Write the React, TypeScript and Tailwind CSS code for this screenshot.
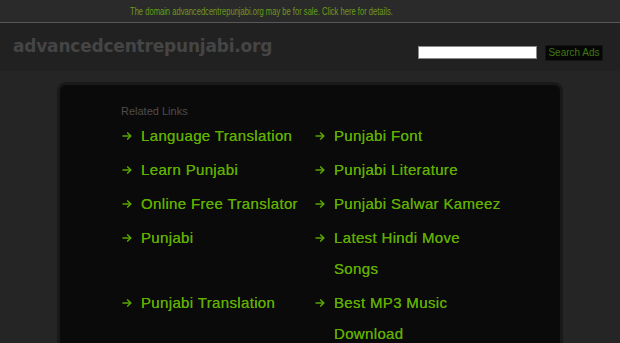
import React from "react";

const items: [string, string][] = [
  ["Language Translation", "Punjabi Font"],
  ["Learn Punjabi", "Punjabi Literature"],
  ["Online Free Translator", "Punjabi Salwar Kameez"],
  ["Punjabi", "Latest Hindi Move Songs"],
  ["Punjabi Translation", "Best MP3 Music Download"],
];

function Arrow() {
  return (
    <svg width="10" height="10" viewBox="0 0 10 10" className="mt-[11px]" fill="none" stroke="#5fae00" strokeWidth="1.4">
      <path d="M0.5 5H8.8" />
      <path d="M5.2 1.4L8.8 5L5.2 8.6" />
    </svg>
  );
}

function Item({ text }: { text: string }) {
  return (
    <div className="flex mb-[3px]">
      <span className="w-[19px] shrink-0">
        <Arrow />
      </span>
      <a className="text-[15px] leading-[31px] tracking-[0.35px] text-[#5fae00] [text-shadow:0_0_0.5px_#5fae00]">{text}</a>
    </div>
  );
}

export default function App() {
  return (
    <div className="w-[620px] h-[343px] overflow-hidden bg-[#252525] font-['Liberation_Sans',Arial,sans-serif]">
      <div className="h-[23px] bg-[#2a2a2a] border-b border-[#585858] flex items-center">
        <a className="ml-[130px] text-[11px] leading-none text-[#6a9c1c] origin-left scale-x-[0.69] whitespace-nowrap inline-block">
          The domain advancedcentrepunjabi.org may be for sale. Click here for details.
        </a>
      </div>
      <div className="h-[48px] bg-[#212121] flex items-center justify-between pl-[13px] pr-[17px]">
        <div className="font-['DejaVu_Sans',sans-serif] font-bold text-[17px] text-[#454545] tracking-[-0.2px]">
          advancedcentrepunjabi.org
        </div>
        <div className="flex items-center gap-[8px] mt-[11px]">
          <div className="w-[119px] h-[13px] bg-white border border-[#8a8a8a]" />
          <div className="h-[16px] w-[58px] bg-[#060606] border border-[#151515] flex items-center justify-center text-[10px] text-[#3f7a10]">
            Search Ads
          </div>
        </div>
      </div>
      <div className="pt-[11px]">
        <div className="w-[506px] mx-auto rounded-t-[9px] border-[3px] border-b-0 border-[#191919] bg-[#0a0a0a] h-[300px] pl-[62px] pt-[20px]">
          <div className="text-[11px] leading-[13px] text-[#4d4d4d] mb-[2px] -ml-[1px]">Related Links</div>
          <div className="grid grid-cols-[193px_193px]">
            {items.map(([a, b]) => (
              <React.Fragment key={a}>
                <Item text={a} />
                <Item text={b} />
              </React.Fragment>
            ))}
          </div>
        </div>
      </div>
    </div>
  );
}
